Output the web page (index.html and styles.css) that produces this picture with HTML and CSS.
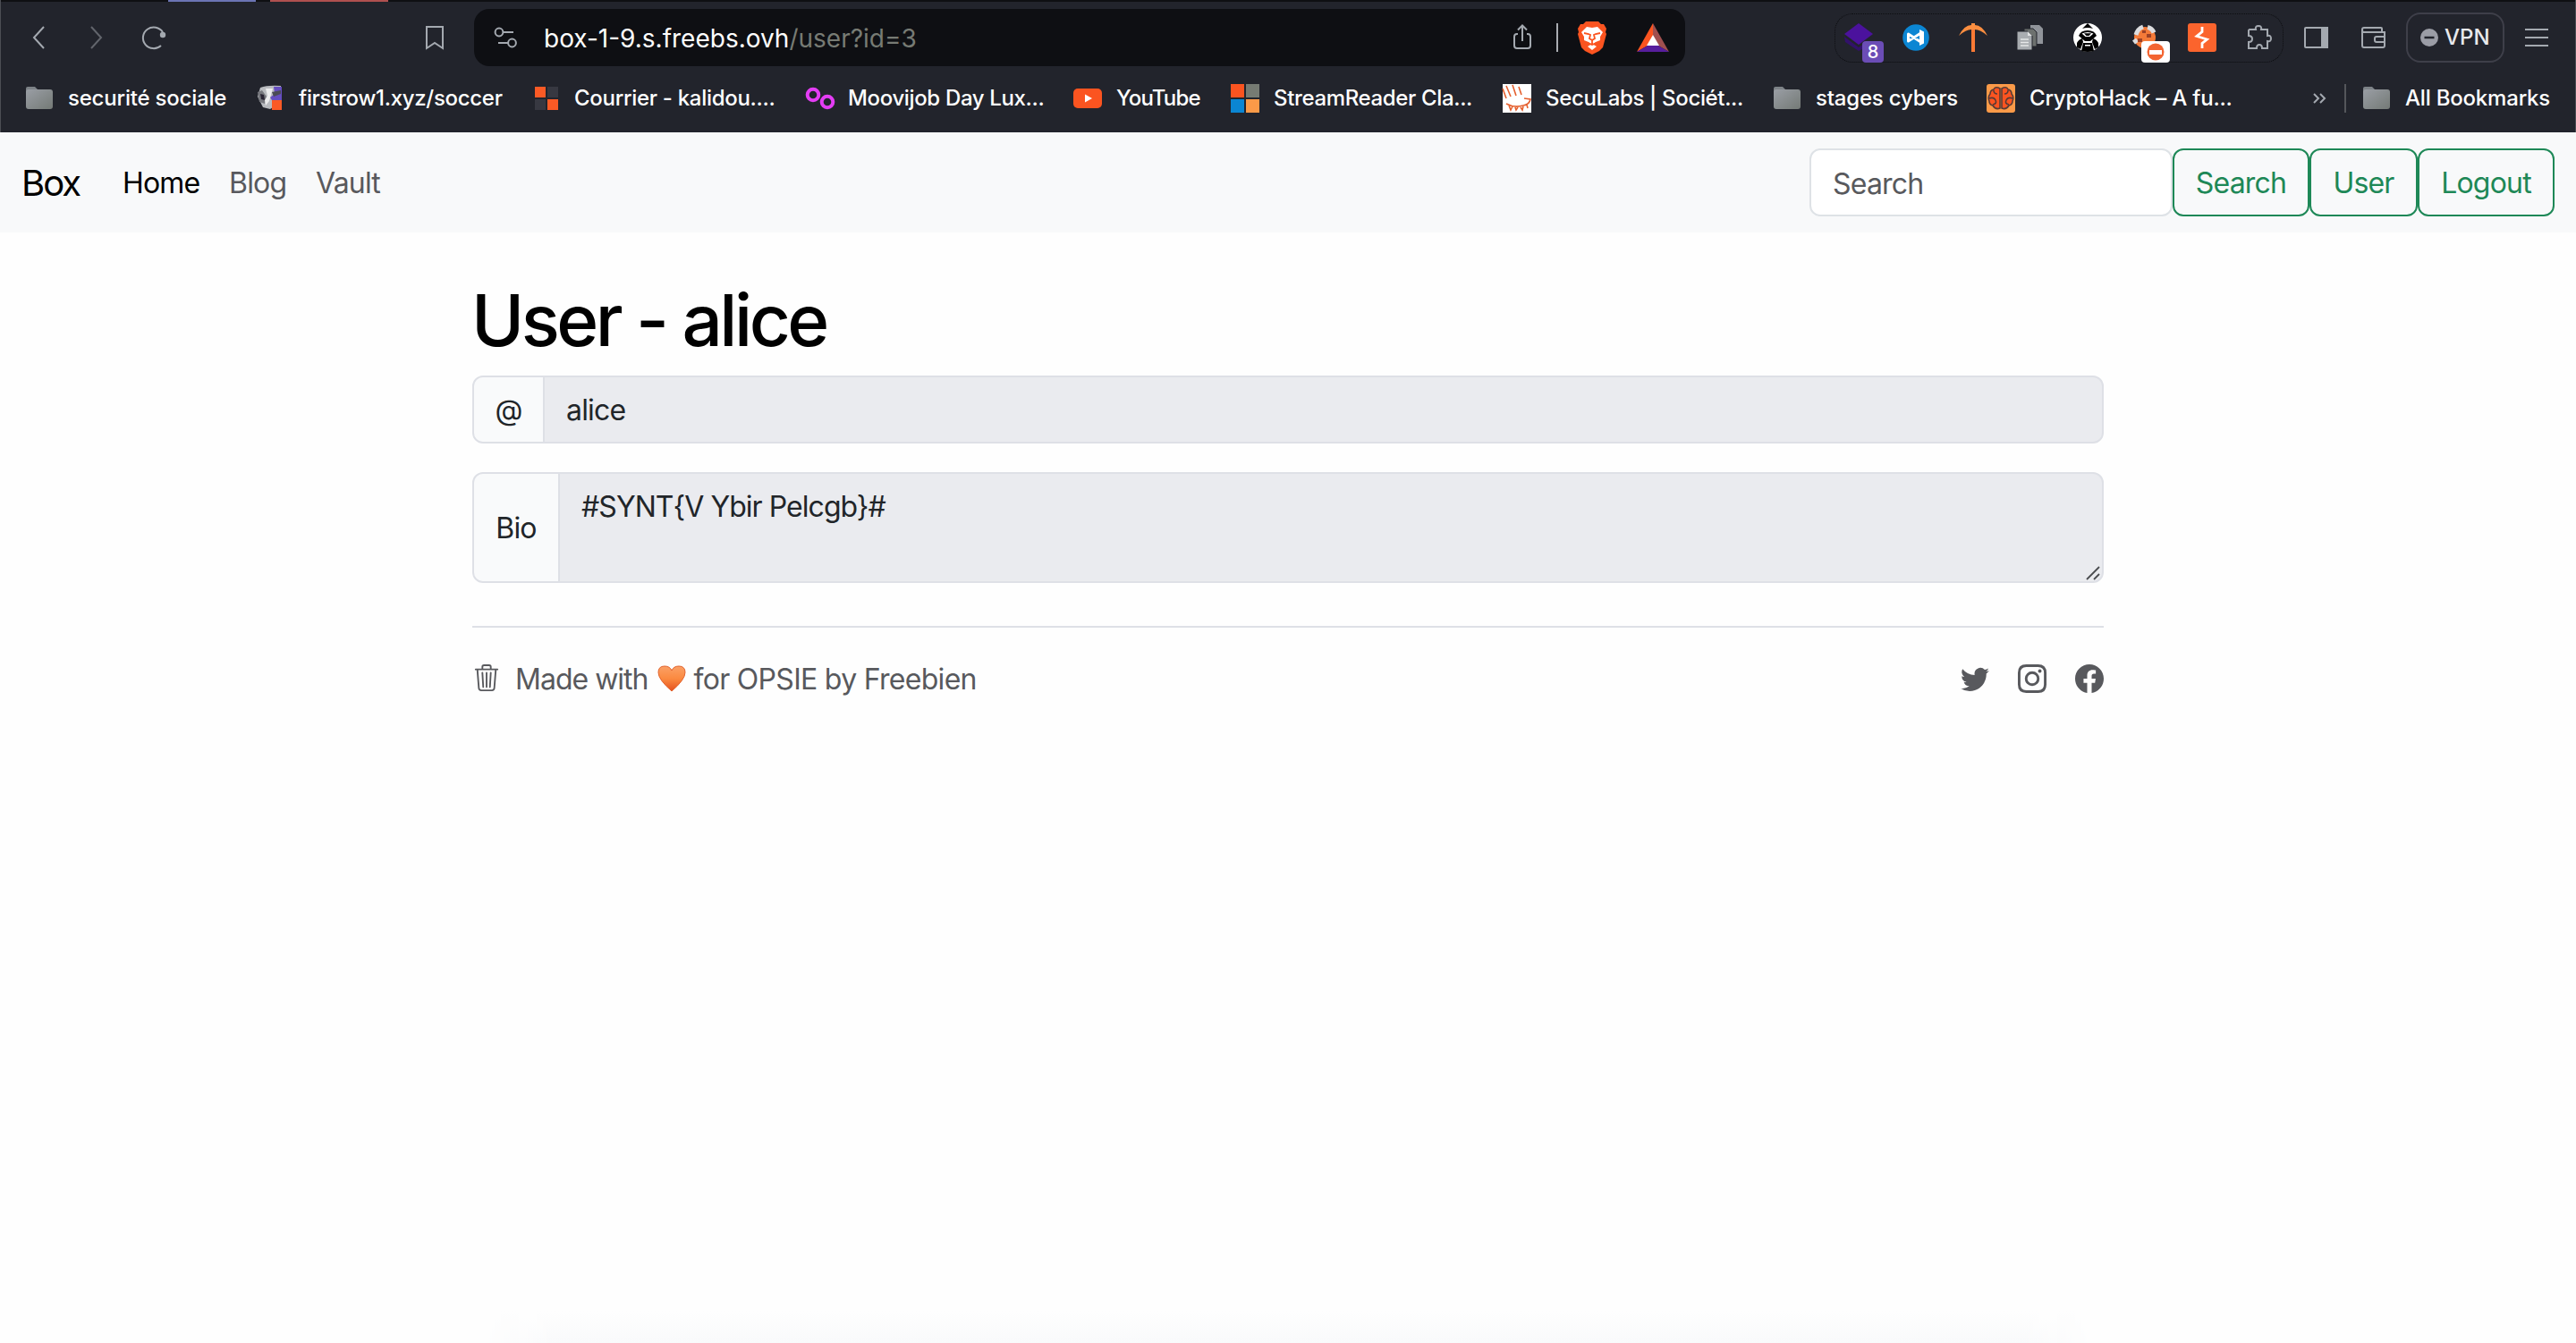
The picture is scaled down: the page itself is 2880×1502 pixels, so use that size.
FILE: index.html
```html
<!DOCTYPE html>
<html lang="en">
<head>
<meta charset="utf-8">
<title>User - alice</title>
<link rel="stylesheet" href="styles.css">
</head>
<body>
<svg class="defs" width="0" height="0">
  <defs>
    <linearGradient id="folderFill" x1="0" y1="0" x2="1" y2="1"><stop offset="0" stop-color="#9a9ea5"/><stop offset="1" stop-color="#747a76"/></linearGradient>
    <symbol id="folder" viewBox="0 0 32 32"><path fill="#7d8287" d="M1 5q0-2 2-2h8l3 3v4H1z"/><rect x="1" y="6" width="30" height="22" rx="3" fill="url(#folderFill)"/></symbol>
  </defs>
</svg>
<header class="browser">
  <div class="tabstrip"><i class="group group-blue"></i><i class="group group-red"></i></div>
  <div class="toolbar">
    <div class="nav-icons">
      <svg width="64" height="32" viewBox="0 0 64 32" class="line"><path d="M37 4 26 16l11 12"/></svg>
      <svg width="64" height="32" viewBox="0 0 64 32" class="line dim"><path d="M26 4l11 12-11 12"/></svg>
      <svg width="64" height="32" viewBox="0 0 64 32" class="line"><path d="M40 25A12 11.800 0 1 1 42 10"/><circle cx="42" cy="13" r="3.200" fill="#a4a9b0" stroke="none"/></svg>
    </div>
    <svg class="line bookmark" width="32" height="32" viewBox="0 0 32 32"><path d="M7 4h18v24l-9-6-9 6z"/></svg>
    <div class="address">
      <svg class="line" width="32" height="32" viewBox="0 0 32 32"><circle cx="8" cy="10" r="4.400"/><path d="M12.500 10H24M7 22h11"/><circle cx="22.500" cy="22" r="4.400"/></svg>
      <p class="url">box-1-9.s.freebs.ovh<span>/user?id=3</span></p>
      <svg class="line share" width="32" height="32" viewBox="0 0 32 32"><path d="M11 12H10q-3 0-3 3v10q0 3 3 3h12q3 0 3-3V15q0-3-3-3h-1M16 20V3M11 7.500 16 2.500l5 5"/></svg>
      <i class="address-rule"></i>
      <svg class="lion" width="32" height="38" viewBox="0 0 32 38"><path fill="#fb5420" d="M9 1h14l3 3 3 0 3 5-1 4 1 2-4 15-4 4-8 4-8-4-4-4L0 15l1-2-1-4 3-5 3 0z"/><path fill="#fff" d="M10 7l6 1 6-1 6 6-3 5 0 4-5 2-4 3-4-3-5-2 0-4-3-5zM16 26l5 3-5 4-5-4z"/><path fill="none" stroke="#fb5420" stroke-width="1.800" d="M7 14l5 1 2 1-1 4 3 2 3-2-1-4 2-1 5-1M16 22v4M11 25l5 2 5-2"/></svg>
      <svg class="bat" width="38" height="34" viewBox="0 0 38 34"><path fill="#fb5420" d="M19 1 1 33l12-7 6-11z"/><path fill="#a0504f" d="M19 1l18 32-12-7-6-11z"/><path fill="#571e9d" d="M1 33h36l-12-7H13z"/><path fill="#fff" d="M19 14l-7 12h14z"/></svg>
    </div>
    <div class="extensions">
      <span class="ext"><svg width="36" height="36" viewBox="0 0 36 36"><path fill="#4b129d" d="M18 2l16 12-16 12L2 14z"/><path fill="#32116a" d="M2 17l16 12 6-4v5l-6 3L3 23z"/></svg><b class="badge count">8</b></span>
      <span class="ext"><svg width="32" height="32" viewBox="0 0 32 32"><circle cx="16" cy="16" r="14.800" fill="#0b86d3"/><path fill="none" stroke="#fff" stroke-width="3" stroke-linejoin="round" d="M7.500 12v8l14-9v10z"/><path fill="#fff" d="M20 7l5 2.500v13L20 25z"/></svg></span>
      <span class="ext"><svg width="32" height="32" viewBox="0 0 32 32"><path fill="#fb7a35" d="M14 7h4v25h-4z"/><path fill="#fb8e40" d="M0 14Q6 2 14 2V0h4v2q8 0 14 12-8-7-14-7h-4Q8 7 0 14z"/></svg></span>
      <span class="ext"><svg width="32" height="32" viewBox="0 0 32 32"><path fill="#90949a" d="M16 2h10l4 4v17H16z"/><path fill="#6d716f" stroke="#23252d" d="M9 6h10l4 4v16H9z"/><path fill="#a9adb1" stroke="#23252d" d="M1 9h12l5 5v16H1z"/><path stroke="#e5e7e8" stroke-width="1.600" d="M5 18h9M5 21.500h9M5 25h9"/><path fill="#dfe1e2" d="M13 9l5 5h-5z"/></svg></span>
      <span class="ext"><svg width="32" height="32" viewBox="0 0 32 32"><circle cx="16" cy="16" r="16" fill="#fff"/><path fill="#000" d="M16 0l6 6q-6-2-12 0zM6 14q2-6 10-6t10 6l-7 6h-6zM4 27V22q2-4 6-5l1 4-3 8zM28 27V22q-2-4-6-5l-1 4 3 8zM11 22h10l2 9q-7 2-14 0z"/><path fill="#fff" d="M9.500 11.500q6.500-3 13 0L18.500 15h-5zM13 24h6v1.600h-6z"/><path fill="#000" d="M12 11.300h8l-2.500 2.700h-3z"/></svg></span>
      <span class="ext"><svg width="32" height="32" viewBox="0 0 32 32"><circle cx="16" cy="16" r="12" fill="#f47a38"/><path fill="none" stroke="#dcdddf" stroke-width="5" d="M6 13q2-7 8-9M19 4.500q5 1 7 6M4 18l3 4"/><path fill="#9c4126" d="M8 17h5v4H8zM18 12h5v4h-5zM13 8h4v3h-4z"/></svg><b class="badge block"><svg width="20" height="20" viewBox="0 0 20 20"><circle cx="10" cy="10" r="9.500" fill="#f36532"/><path fill="#fff" d="M3 8h14v5H3z"/></svg></b></span>
      <span class="ext"><svg width="32" height="32" viewBox="0 0 32 32"><rect width="32" height="32" rx="3" fill="#fb642d"/><path fill="none" stroke="#fff" stroke-width="2.800" d="M16 4v5.500L10 14.500l11.500 3.500L16 22.500V28"/></svg></span>
      <span class="ext"><svg class="line" width="32" height="32" viewBox="0 0 32 32"><path d="M5 7h7q-1-4 3-4t3 4h7v7q4-1 4 3t-4 3v8h-6q0-4-3-4t-3 4H4v-7q4 0 4-3.500T4 14V8z"/></svg></span>
    </div>
    <span class="tool"><svg class="line" width="32" height="32" viewBox="0 0 32 32"><rect x="3" y="5" width="25" height="22" rx="1"/><path fill="#a4a9b0" d="M22 5h6v22h-6z"/></svg></span>
    <span class="tool"><svg class="line" width="32" height="32" viewBox="0 0 32 32"><path d="M25 10V6q0-1-1-1H5Q3 5 3 7v18q0 2 2 2h21q2 0 2-2V10H5Q3 10 3 7.500M28 15H19q-2 0-2 2v2q0 2 2 2h9"/></svg></span>
    <div class="vpn"><svg width="20" height="20" viewBox="0 0 20 20"><circle cx="10" cy="10" r="10" fill="#9b9da6"/><path stroke="#23252d" stroke-width="2.500" d="M4.500 10h11"/></svg><span>VPN</span></div>
    <svg class="line menu" width="28" height="28" viewBox="0 0 28 28"><path d="M1 5h26M1 14h26M1 23h26"/></svg>
  </div>
  <nav class="bookmarks">
    <a><svg width="32" height="32"><use href="#folder"/></svg><span class="t1">securité sociale</span></a>
    <a><svg width="32" height="32" viewBox="0 0 32 32"><path fill="#b9bbbf" d="M5 4q8-3 23-2v18L16 28 8 26 2 14z"/><path fill="#77787e" d="M2 9l5-2 5 7-2 8-6-2z"/><path fill="#292433" d="M5 11l4 1 1 6-4-1z"/><path fill="#ececed" d="M11 5h8l-4 14-4 5-1-6 3-5z"/><path fill="#664ec0" d="M20 3h9v15H18l-2-3 5-4z"/><path fill="#4b4c55" d="M18 9l10-2v4l-8 3z"/><path fill="#fb5a25" d="M18 18h11v11H18z"/></svg><span class="t2">firstrow1.xyz/soccer</span></a>
    <a><svg width="32" height="32" viewBox="0 0 32 32"><path fill="#fb5a25" d="M4 3h12v12H4zM18 17h12v12H18z"/><path fill="#373841" d="M18 3h12v12H18zM4 17h12v12H4z"/></svg><span class="t3">Courrier - kalidou....</span></a>
    <a><svg width="32" height="32" viewBox="0 0 32 32"><g fill="none" stroke="#e43df4" stroke-width="4"><circle cx="9" cy="12" r="6.300"/><circle cx="25" cy="20" r="6.300"/></g></svg><span class="t4">Moovijob Day Lux...</span></a>
    <a><svg width="32" height="32" viewBox="0 0 32 32"><rect y="5" width="32" height="22" rx="5" fill="#fb5420"/><path fill="#fff" d="M13 11.500v9l8-4.500z"/></svg><span class="t5">YouTube</span></a>
    <a><svg width="32" height="32" viewBox="0 0 32 32"><path fill="#fb5420" d="M0 0h15v15H0z"/><path fill="#767b73" d="M17 0h15v15H17z"/><path fill="#0b86d3" d="M0 17h15v15H0z"/><path fill="#fb9a48" d="M17 17h15v15H17z"/></svg><span class="t6">StreamReader Cla...</span></a>
    <a><svg width="32" height="32" viewBox="0 0 32 32"><path fill="#fff" d="M0 0h32v32H0z"/><g fill="none" stroke="#e5602f" stroke-width="1.600"><path d="M0 5l4 11M4 2l5 12M11 1l4 12M18 3l3 9"/><path d="M4 22q9 5 19 2 7-1 8-7l-7-1M7 24l2 5 2-4M14 26l1 3 2-3M20 26l2 3 1-4M27 23l1 4"/></g></svg><span class="t7">SecuLabs | Sociét...</span></a>
    <a><svg width="32" height="32"><use href="#folder"/></svg><span class="t8">stages cybers</span></a>
    <a><svg width="32" height="32" viewBox="0 0 32 32"><rect width="32" height="32" rx="3" fill="#fb9a48"/><g fill="#fb5420" stroke="#573b35" stroke-width="1.600"><path d="M15 5q-5-3-7 1-4 1-4 5-3 4-1 8 0 4 4 5 3 5 8 3zM17 5q5-3 7 1 4 1 4 5 3 4 1 8 0 4-4 5-3 5-8 3z"/><path fill="none" d="M8 7q0 4 4 4M3 16q5-2 7 2t-3 5M24 7q0 4-4 4M29 16q-5-2-7 2t3 5"/></g></svg><span class="t9">CryptoHack – A fu...</span></a>
    <svg class="line more" width="16" height="16" viewBox="0 0 16 16"><path d="M2 3l5 5-5 5M9 3l5 5-5 5"/></svg>
    <i class="bookmark-rule"></i>
    <a><svg width="32" height="32"><use href="#folder"/></svg><span class="t10">All Bookmarks</span></a>
  </nav>
</header>

<nav class="navbar">
  <a class="brand">Box</a>
  <a class="link active">Home</a>
  <a class="link blog">Blog</a>
  <a class="link vault">Vault</a>
  <form class="search">
    <input class="query" type="text" placeholder="Search">
    <button class="btn btn-search" type="button">Search</button>
    <button class="btn btn-user" type="button">User</button>
    <button class="btn btn-logout" type="button">Logout</button>
  </form>
</nav>

<main class="container">
  <h1>User - alice</h1>
  <div class="group-row"><span class="label label-at">@</span><div class="field name">alice</div></div>
  <div class="group-row tall"><span class="label label-bio">Bio</span><div class="field bio"><span>#SYNT{V Ybir Pelcgb}#</span><svg class="grip" width="16" height="16" viewBox="0 0 16 16"><path d="M1 15 15 1M9 15l6-6" stroke="#4b4d50" stroke-width="1.800"/></svg></div></div>
  <footer>
    <svg class="trash" width="32" height="32" viewBox="0 0 16 16"><path d="M6.500 1h3a.5.5 0 0 1 .5.5v1H6v-1a.5.5 0 0 1 .5-.5ZM11 2.500v-1A1.500 1.500 0 0 0 9.500 0h-3A1.500 1.500 0 0 0 5 1.500v1H2.506a.58.58 0 0 0-.01 0H1.500a.5.5 0 0 0 0 1h.538l.853 10.660A2 2 0 0 0 4.885 16h6.230a2 2 0 0 0 1.994-1.840l.853-10.660h.538a.5.5 0 0 0 0-1h-.995a.59.59 0 0 0-.01 0H11Zm1.958 1-.846 10.580a1 1 0 0 1-.997.920h-6.230a1 1 0 0 1-.997-.920L3.042 3.500h9.916Zm-7.487 1a.5.5 0 0 1 .528.470l.5 8.500a.5.5 0 0 1-.998.060L5 5.030a.5.5 0 0 1 .47-.53Zm5.058 0a.5.5 0 0 1 .47.530l-.5 8.500a.5.5 0 1 1-.998-.060l.5-8.500a.5.5 0 0 1 .528-.470ZM8 4.500a.5.5 0 0 1 .5.500v8.500a.5.5 0 0 1-1 0V5a.5.5 0 0 1 .5-.500Z"/></svg>
    <p><span class="made">Made with</span><svg class="heart" width="32" height="30" viewBox="0 0 32 30"><defs><linearGradient id="heartFill" x1="0" y1="0" x2="0" y2="1"><stop offset="0" stop-color="#fba066"/><stop offset=".5" stop-color="#fb8a40"/><stop offset="1" stop-color="#e4501f"/></linearGradient></defs><path fill="url(#heartFill)" stroke="#e2632e" d="M16 29Q1 16 1 8q0-7 7-7 6 0 8 5 2-5 8-5 7 0 7 7 0 8-15 21z"/></svg><span class="by">for OPSIE by Freebien</span></p>
    <div class="social">
      <svg width="32" height="32" viewBox="0 0 16 16"><path d="M5.026 15c6.038 0 9.341-5.003 9.341-9.334 0-.140 0-.282-.006-.422A6.685 6.685 0 0 0 16 3.542a6.658 6.658 0 0 1-1.889.518 3.301 3.301 0 0 0 1.447-1.817 6.533 6.533 0 0 1-2.087.793A3.286 3.286 0 0 0 7.875 6.030a9.325 9.325 0 0 1-6.767-3.429 3.289 3.289 0 0 0 1.018 4.382A3.323 3.323 0 0 1 .640 6.575v.045a3.288 3.288 0 0 0 2.632 3.218 3.203 3.203 0 0 1-.865.115 3.230 3.230 0 0 1-.614-.057 3.283 3.283 0 0 0 3.067 2.277A6.588 6.588 0 0 1 .780 13.580a6.320 6.320 0 0 1-.780-.045A9.344 9.344 0 0 0 5.026 15z"/></svg>
      <svg width="32" height="32" viewBox="0 0 16 16"><path fill="none" stroke="#58595d" stroke-width="1.450" d="M4.700.720h6.600q3.980 0 3.980 3.980v6.600q0 3.980-3.980 3.980H4.700q-3.980 0-3.980-3.980V4.700Q.720.720 4.700.720z"/><circle cx="8" cy="8" r="3.380" fill="none" stroke="#58595d" stroke-width="1.440"/><circle cx="12.270" cy="3.730" r=".96"/></svg>
      <svg width="32" height="32" viewBox="0 0 16 16"><path d="M16 8.049c0-4.446-3.582-8.050-8-8.050C3.580 0-.002 3.603-.002 8.050c0 4.017 2.926 7.347 6.750 7.951v-5.625h-2.030V8.050H6.750V6.275c0-2.017 1.195-3.131 3.022-3.131.876 0 1.791.157 1.791.157v1.980h-1.009c-.993 0-1.303.621-1.303 1.258v1.510h2.218l-.354 2.326H9.250V16c3.824-.604 6.750-3.934 6.750-7.951z"/></svg>
    </div>
  </footer>
</main>
<div class="bottom-shade"></div>
</body>
</html>
```
FILE: styles.css
```css
* { box-sizing: border-box; }
body { margin: 0; height: 1502px; overflow: hidden; display: flex; flex-direction: column; background: #fefefe; color: #212529; font: 400 32px/48px Inter, "Liberation Sans", sans-serif; letter-spacing: -0.8px; }
svg { display: block; flex: none; overflow: visible; }
p { margin: 0; white-space: nowrap; }
.defs { position: absolute; }
.line { fill: none; stroke: #a4a9b0; stroke-width: 2; }
.dim { stroke: #62656c; }

.browser { height: 148px; flex: none; background: #22242c; border: solid #4c4e54; border-width: 0 1px; letter-spacing: 0; }
.tabstrip { height: 2px; background: #0e0f13; display: flex; gap: 16px; padding-left: 187px; }
.group { height: 2px; }
.group-blue { width: 98px; background: #6b74b4; }
.group-red { width: 132px; background: #b0504f; }
.toolbar { height: 80px; display: flex; align-items: center; padding-left: 11px; }
.nav-icons { display: flex; }
.bookmark { margin-left: 266px; }
.address { width: 1354px; height: 64px; margin-left: 28px; border-radius: 17px; background: #0e0f13; display: flex; align-items: center; padding-left: 20px; flex: none; }
.url { flex: 1; margin-left: 26px; padding-top: 1px; font-size: 28px; color: #fff; letter-spacing: 0; }
.url span { color: #777b74; }
.address-rule { width: 2px; height: 32px; background: #a9acb1; margin: 0 22px; }
.bat { margin: 0 17px 0 33px; }
.extensions { width: 502px; height: 55px; margin-left: 167px; border: 1px dotted #0c0d10; border-radius: 20px; display: flex; align-items: center; padding-left: 10px; flex: none; }
.ext, .tool { position: relative; width: 64px; height: 36px; flex: none; display: flex; align-items: center; }
.ext:first-child svg { margin-left: -2px; }
.badge { position: absolute; left: 20px; top: 22px; height: 24px; border-radius: 4px; font-size: 20px; line-height: 26px; font-weight: 500; color: #fff; display: flex; justify-content: center; align-items: center; }
.count { width: 24px; background: #6b4db6; }
.block { left: 12px; width: 32px; background: #fff; }
.tool { margin-left: 21px; }
.tool + .tool { margin-left: 0; }
.vpn { width: 110px; height: 56px; margin-left: -12px; border: 2px solid #3e3f49; border-radius: 16px; display: flex; align-items: center; padding-left: 14px; gap: 7px; font-size: 24px; font-weight: 500; color: #e8e9ec; }
.menu { margin-left: 22px; }
.bookmarks { display: grid; grid-template-columns: 258px 308px 306px 300px 176px 304px 302px 239px 364px 36px 20px 1fr; align-items: center; height: 56px; padding-left: 27px; font-size: 24px; font-weight: 500; color: #fff; }
.bookmarks a { display: flex; align-items: center; gap: 16px; white-space: nowrap; }
.bookmark-rule { width: 2px; height: 32px; background: #54565b; }
.t1, .t8, .t9, .t10 { letter-spacing: -0.2px; }
.t2, .t3 { letter-spacing: -0.3px; }
.t4, .t6, .t7 { letter-spacing: -0.35px; }
.t5 { letter-spacing: -0.85px; }

.navbar { height: 112px; flex: none; background: #f8f9fa; display: flex; align-items: center; padding: 0 24px; white-space: nowrap; }
.brand { width: 113px; padding-top: 2px; font-size: 40px; letter-spacing: -2px; color: #000; }
.link { padding-top: 1px; color: #58595d; }
.active { color: #000; width: 119px; }
.blog { width: 97px; }
.search { display: flex; margin-left: auto; }
.query { width: 406px; height: 76px; border: 2px solid #dee2e6; border-radius: 12px; padding: 2px 24px 0; background: #fff; font: inherit; letter-spacing: inherit; }
.query::placeholder { color: #58595d; opacity: 1; }
.btn { height: 76px; padding: 2px 0 0; border: 2px solid #1e8857; border-radius: 12px; background: none; color: #1e8857; font: inherit; letter-spacing: inherit; }
.btn-search { width: 153px; }
.btn-user { width: 121px; }
.btn-logout { width: 153px; }

.container { width: 1824px; margin: 0 auto; padding-top: 50px; flex: 1; }
h1 { margin: 0 0 14px -1px; font-size: 80px; line-height: 96px; font-weight: 500; letter-spacing: -3.5px; color: #000; }
.group-row { display: flex; height: 76px; border: 2px solid #dee0e6; border-radius: 12px; overflow: hidden; margin-bottom: 32px; background: #eaebef; }
.tall { height: 124px; margin-bottom: 48px; }
.label { background: #f9fafb; border-right: 2px solid #dee0e6; display: flex; align-items: center; justify-content: center; padding-top: 2px; }
.label-at { width: 79px; }
.label-bio { width: 96px; }
.field { flex: 1; padding: 13px 24px 0; }
.bio { position: relative; letter-spacing: -0.95px; }
.grip { position: absolute; right: 2px; bottom: 1px; }
footer { border-top: 2px solid #dee0e6; display: flex; align-items: center; height: 116px; color: #58595d; fill: #58595d; }
footer p { display: flex; align-items: center; margin-left: 16px; padding-top: 2px; }
.trash { width: 30px; height: 30px; margin: -3px 1px 0; }
.made { letter-spacing: -1px; }
.by { letter-spacing: -0.7px; }
.heart { margin: -2px 8px 0 11px; }
.social { margin-left: auto; display: flex; gap: 32px; }
.bottom-shade { height: 36px; margin: 0 540px; background: linear-gradient(#fefefe, #f9fafb); -webkit-mask-image: linear-gradient(90deg, transparent, #000 80px, #000 calc(100% - 80px), transparent); mask-image: linear-gradient(90deg, transparent, #000 80px, #000 calc(100% - 80px), transparent); }
```
